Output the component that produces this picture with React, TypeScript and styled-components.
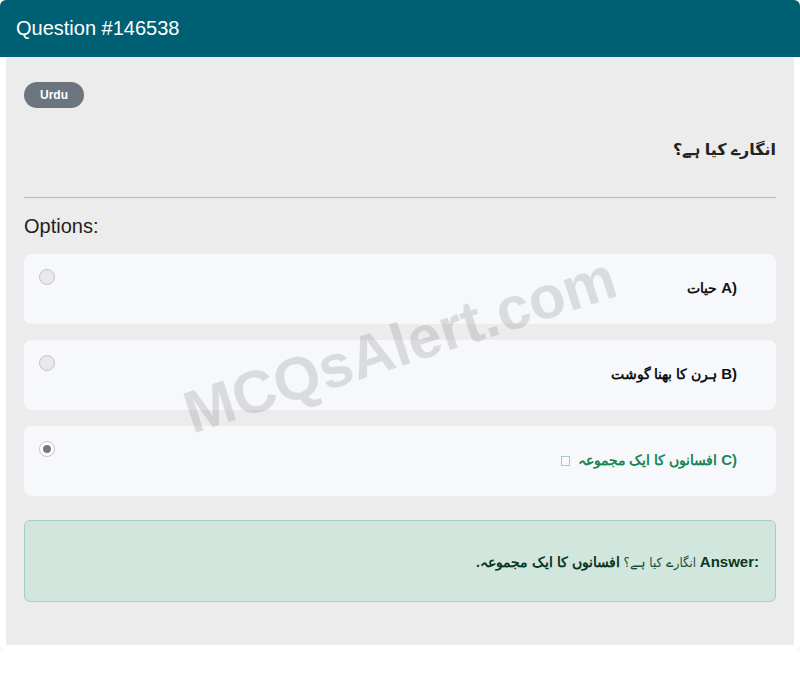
import React from "react";
import styled, { createGlobalStyle } from "styled-components";

const GlobalStyle = createGlobalStyle`
  * { box-sizing: border-box; }
  body {
    margin: 0;
    background: #ffffff;
    font-family: "Liberation Sans", Arial, sans-serif;
  }
`;

const Card = styled.div`
  position: relative;
  width: 800px;
  background: #ffffff;
  border-radius: 6px;
  padding-bottom: 6px;
  overflow: hidden;
  box-shadow: 0 1px 3px rgba(0, 0, 0, 0.08);
`;

const Header = styled.div`
  height: 57px;
  background: #006073;
  color: #ffffff;
  font-size: 20px;
  padding: 0 16px;
  display: flex;
  align-items: center;
`;

const Body = styled.div`
  margin: 0 6px;
  background: #ececec;
  padding: 25px 18px 43px;
  display: flex;
  flex-direction: column;
`;

const BadgeRow = styled.div`
  display: flex;
`;

const Badge = styled.span`
  height: 26px;
  padding: 0 16px;
  border-radius: 13px;
  background: #6c757d;
  color: #ffffff;
  font-size: 12px;
  font-weight: 700;
  display: flex;
  align-items: center;
`;

const QuestionText = styled.h2`
  margin: 30px 0 0;
  direction: rtl;
  text-align: right;
  font-family: "Liberation Sans", "DejaVu Sans", sans-serif;
  font-size: 16px;
  line-height: 24px;
  font-weight: 700;
  color: #222222;
`;

const Divider = styled.hr`
  margin: 35px 0 0;
  border: none;
  border-top: 1px solid #bbbbbb;
`;

const OptionsTitle = styled.div`
  margin-top: 16px;
  font-size: 20px;
  line-height: 24px;
  color: #222222;
`;

const OptionList = styled.div`
  margin-top: 16px;
  display: flex;
  flex-direction: column;
  gap: 16px;
`;

const Option = styled.div`
  height: 70px;
  background: #f7f8fc;
  border-radius: 7px;
  padding: 0 39px 0 15px;
  display: flex;
  align-items: flex-start;
`;

const Radio = styled.span<{ $checked?: boolean }>`
  margin-top: 15px;
  width: 16px;
  height: 16px;
  flex: 0 0 16px;
  border-radius: 50%;
  border: 1px solid #c4c4c4;
  background: ${(p) => (p.$checked ? "#ffffff" : "#e9e9e9")};
  display: flex;
  align-items: center;
  justify-content: center;

  &::after {
    content: "";
    display: ${(p) => (p.$checked ? "block" : "none")};
    width: 8px;
    height: 8px;
    border-radius: 50%;
    background: #7a7a7a;
  }
`;

const OptionLabel = styled.div<{ $correct?: boolean }>`
  flex: 1;
  align-self: center;
  margin-top: -3px;
  direction: rtl;
  text-align: right;
  font-size: 14px;
  font-weight: 700;
  color: ${(p) => (p.$correct ? "#198754" : "#111111")};
`;

const Letter = styled.span`
  direction: ltr;
  unicode-bidi: isolate;
  font-size: 15px;
`;

const Tofu = styled.span`
  display: inline-block;
  width: 9px;
  height: 10px;
  margin-right: 4px;
  border: 1px solid #9fd3b8;
  vertical-align: -1px;
`;

const AnswerBox = styled.div`
  margin-top: 24px;
  height: 82px;
  background: #d1e7dd;
  border: 1px solid #a3cfbb;
  border-radius: 6px;
  padding: 0 16px;
  display: flex;
  align-items: center;
  justify-content: flex-end;
  color: #0a3622;
  font-size: 14px;
`;

const AnswerText = styled.div`
  direction: rtl;
  text-align: right;
`;

const AnswerLabel = styled.strong`
  direction: ltr;
  unicode-bidi: isolate;
  font-size: 15px;
`;

const Thin = styled.span`
  font-family: "DejaVu Sans Condensed", "DejaVu Sans", sans-serif;
  font-size: 13px;
  font-weight: 400;
  color: #1d4d36;
`;

const Watermark = styled.div`
  position: absolute;
  left: 400px;
  top: 345px;
  transform: translate(-50%, -50%) rotate(-18deg);
  font-size: 60px;
  font-weight: 700;
  color: rgba(120, 120, 125, 0.22);
  white-space: nowrap;
  pointer-events: none;
`;

const options = [
  { letter: "A)", text: "حیات" },
  { letter: "B)", text: "ہرن کا بھنا گوشت" },
  { letter: "C)", text: "افسانوں کا ایک مجموعہ", correct: true },
];

export default function App() {
  return (
    <>
      <GlobalStyle />
      <Card>
        <Header>Question #146538</Header>
        <Body>
          <BadgeRow>
            <Badge>Urdu</Badge>
          </BadgeRow>
          <QuestionText>انگارے کیا ہے؟</QuestionText>
          <Divider />
          <OptionsTitle>Options:</OptionsTitle>
          <OptionList>
            {options.map((o) => (
              <Option key={o.letter}>
                <Radio $checked={o.correct} />
                <OptionLabel $correct={o.correct}>
                  <Letter>{o.letter}</Letter> {o.text}
                  {o.correct && <> <Tofu /></>}
                </OptionLabel>
              </Option>
            ))}
          </OptionList>
          <AnswerBox>
            <AnswerText>
              <AnswerLabel>Answer:</AnswerLabel> <Thin>انگارے کیا ہے؟</Thin>{" "}
              <strong>افسانوں کا ایک مجموعہ.</strong>
            </AnswerText>
          </AnswerBox>
        </Body>
        <Watermark>MCQsAlert.com</Watermark>
      </Card>
    </>
  );
}
